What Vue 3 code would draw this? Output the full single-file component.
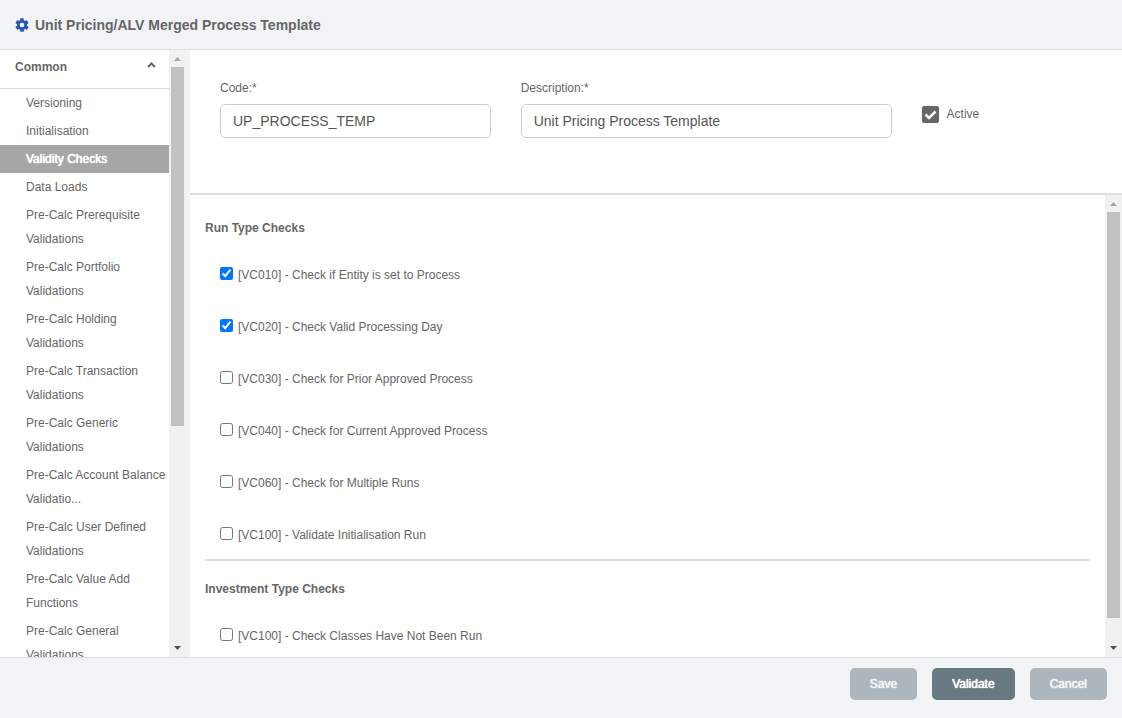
<script setup>
import { ref, reactive } from 'vue'

const code = ref('UP_PROCESS_TEMP')
const description = ref('Unit Pricing Process Template')
const active = ref(true)
const current = ref('Validity Checks')

const navItems = [
  'Versioning',
  'Initialisation',
  'Validity Checks',
  'Data Loads',
  'Pre-Calc Prerequisite Validations',
  'Pre-Calc Portfolio Validations',
  'Pre-Calc Holding Validations',
  'Pre-Calc Transaction Validations',
  'Pre-Calc Generic Validations',
  'Pre-Calc Account Balance Validatio...',
  'Pre-Calc User Defined Validations',
  'Pre-Calc Value Add Functions',
  'Pre-Calc General Validations',
]

const groups = reactive([
  {
    title: 'Run Type Checks',
    checks: [
      { id: 'run-vc010', label: '[VC010] - Check if Entity is set to Process', on: true },
      { id: 'run-vc020', label: '[VC020] - Check Valid Processing Day', on: true },
      { id: 'run-vc030', label: '[VC030] - Check for Prior Approved Process', on: false },
      { id: 'run-vc040', label: '[VC040] - Check for Current Approved Process', on: false },
      { id: 'run-vc060', label: '[VC060] - Check for Multiple Runs', on: false },
      { id: 'run-vc100', label: '[VC100] - Validate Initialisation Run', on: false },
    ],
  },
  {
    title: 'Investment Type Checks',
    checks: [{ id: 'inv-vc100', label: '[VC100] - Check Classes Have Not Been Run', on: false }],
  },
])
</script>

<template>
  <div class="page">
    <header class="header">
      <svg class="gear" viewBox="0 0 24 24" aria-hidden="true">
        <path d="M19.4 13c0-.3.1-.6.1-1s0-.7-.1-1l2.1-1.6c.2-.2.2-.4.1-.7l-2-3.4c-.1-.3-.4-.3-.6-.3l-2.5 1c-.5-.4-1.100-.7-1.700-1l-.4-2.600c0-.2-.2-.4-.5-.4h-4c-.2 0-.4.2-.5.4L9.100 5c-.6.3-1.200.600-1.700 1l-2.400-1c-.3 0-.5 0-.6.3l-2 3.400c-.1.3-.1.5.1.7L4.600 11c0 .3-.1.600-.1 1s0 .7.1 1l-2.100 1.600c-.2.2-.2.400-.1.700l2 3.400c.1.300.3.300.6.300l2.400-1c.500.400 1.100.700 1.700 1l.4 2.600c0 .2.200.400.500.400h4c.2 0 .4-.2.500-.4l.4-2.600c.600-.3 1.200-.600 1.700-1l2.500 1c.2 0 .5 0 .6-.3l2-3.400c.1-.3.1-.5-.1-.7zM12 15.500a3.500 3.500 0 1 1 0-7 3.500 3.500 0 0 1 0 7z" />
      </svg>
      <h1>Unit Pricing/ALV Merged Process Template</h1>
    </header>

    <div class="body">
      <aside class="sidebar">
        <nav class="nav" aria-label="Common">
          <button type="button" class="nav-head" aria-expanded="true">
            Common
            <svg class="caret" viewBox="0 0 9 6" aria-hidden="true"><path d="M1 5l3.500-3.500L8 5" /></svg>
          </button>
          <ul>
            <li v-for="item in navItems" :key="item">
              <a href="#" :class="{ selected: item === current }" @click.prevent="current = item">{{ item }}</a>
            </li>
          </ul>
        </nav>
        <div class="scrollbar" aria-hidden="true">
          <svg class="arrow up" viewBox="0 0 17 17"><path d="M5 11h7L8.500 7z" /></svg>
          <div class="track"><div class="thumb nav-thumb"></div></div>
          <svg class="arrow" viewBox="0 0 17 17"><path d="M5 6h7L8.500 10z" /></svg>
        </div>
      </aside>

      <main class="main">
        <form class="details" @submit.prevent>
          <div class="field">
            <label for="code">Code:*</label>
            <input id="code" v-model="code" type="text" />
          </div>
          <div class="field">
            <label for="description">Description:*</label>
            <input id="description" v-model="description" type="text" />
          </div>
          <div class="field">
            <label class="active" for="active">
              <span class="tick">
                <input id="active" v-model="active" type="checkbox" />
                <svg v-if="active" viewBox="0 0 17 17" aria-hidden="true"><path d="M3.500 8.500l3.500 3.500L13.500 5.500" /></svg>
              </span>
              Active
            </label>
          </div>
        </form>

        <div class="checks-pane">
          <div class="checks">
            <section v-for="group in groups" :key="group.title">
              <h2>{{ group.title }}</h2>
              <div v-for="check in group.checks" :key="check.id" class="check">
                <input :id="check.id" v-model="check.on" type="checkbox" />
                <label :for="check.id">{{ check.label }}</label>
              </div>
            </section>
          </div>
          <div class="scrollbar" aria-hidden="true">
            <svg class="arrow up" viewBox="0 0 17 17"><path d="M5 11h7L8.500 7z" /></svg>
            <div class="track"><div class="thumb checks-thumb"></div></div>
            <svg class="arrow" viewBox="0 0 17 17"><path d="M5 6h7L8.500 10z" /></svg>
          </div>
        </div>
      </main>
    </div>

    <footer class="footer">
      <button type="button" disabled>Save</button>
      <button type="button">Validate</button>
      <button type="button" disabled>Cancel</button>
    </footer>
  </div>
</template>

<style>
body {
  margin: 0;
  background: #fff;
}
</style>

<style scoped>
.page {
  display: flex;
  flex-direction: column;
  height: 100vh;
  overflow: hidden;
  font-family: "Liberation Sans", Arial, sans-serif;
  font-size: 12px;
  line-height: 24px;
  color: #666;
}
.page * {
  box-sizing: border-box;
}
.header {
  display: flex;
  align-items: center;
  gap: 5px;
  padding: 13px 14px 12px;
  background: #f2f3f5;
  border-bottom: 1px solid #dcdee0;
}
.gear {
  width: 16px;
  height: 16px;
  fill: #2459b3;
}
h1 {
  margin: 0;
  font-size: 14px;
  font-weight: bold;
}
.body {
  flex: 1;
  min-height: 0;
  display: flex;
}
.sidebar {
  flex: none;
  display: flex;
  width: 190px;
  padding-right: 4px;
  background: #f3f3f4;
}
.nav {
  flex: 1;
  min-width: 0;
  overflow: hidden;
  background: #fff;
}
.nav-head {
  display: flex;
  justify-content: space-between;
  align-items: flex-start;
  width: 100%;
  padding: 5px 13px 9px 15px;
  border: 0;
  border-bottom: 1px solid #dedede;
  background: none;
  font: bold 12px/24px "Liberation Sans", Arial, sans-serif;
  color: #666;
}
.caret {
  width: 9px;
  height: 6px;
  margin-top: 7px;
  fill: none;
  stroke: #666;
  stroke-width: 2;
}
ul {
  margin: 0;
  padding: 0;
  list-style: none;
}
li a {
  display: block;
  padding: 2px 0 2px 26px;
  color: #666;
  text-decoration: none;
}
li a.selected {
  background: #a6a6a6;
  color: #fff;
  text-shadow: 0 0 1px #fff, 0 0 1px #fff;
}
.scrollbar {
  flex: none;
  display: flex;
  flex-direction: column;
  width: 17px;
  background: #f1f1f1;
}
.arrow {
  flex: none;
  width: 17px;
  height: 17px;
  fill: #505050;
}
.arrow.up {
  fill: #a3a3a3;
}
.track {
  flex: 1;
  padding: 0 2px;
}
.thumb {
  background: #c1c1c1;
}
.nav-thumb {
  height: 62.6%;
}
.checks-thumb {
  height: 94.9%;
}
.main {
  flex: 1;
  min-width: 0;
  display: flex;
  flex-direction: column;
}
.details {
  display: grid;
  grid-template-columns: 3fr 4fr 2fr;
  padding: 26px 15px 55px;
  border-bottom: 2px solid #dedede;
}
.field {
  padding: 0 15px;
}
.field > label {
  display: block;
}
.field > input {
  display: block;
  width: 100%;
  height: 34px;
  margin-top: 4px;
  padding: 0 12px;
  border: 1px solid #ccc;
  border-radius: 5px;
  background: #fff;
  font: 14px "Liberation Sans", Arial, sans-serif;
  color: #555;
}
.field > .active {
  display: flex;
  align-items: center;
  gap: 8px;
  margin-top: 26px;
}
.tick {
  position: relative;
  width: 17px;
  height: 17px;
}
.tick input {
  display: block;
  width: 100%;
  height: 100%;
  margin: 0;
  appearance: none;
  border: 1px solid #666;
  border-radius: 2px;
}
.tick input:checked {
  background: #666;
}
.tick svg {
  position: absolute;
  inset: 0;
  pointer-events: none;
  fill: none;
  stroke: #fff;
  stroke-width: 2.5;
}
.checks-pane {
  flex: 1;
  min-height: 0;
  display: flex;
}
.checks {
  flex: 1;
  min-width: 0;
  overflow: hidden;
  padding: 5px 15px 0;
}
section + section {
  border-top: 2px solid #dedede;
}
h2 {
  margin: 0;
  padding: 16px 0 7px;
  font-size: 12px;
  line-height: 24px;
  font-weight: bold;
}
.check {
  display: flex;
  align-items: center;
  gap: 5px;
  padding: 16px 15px 12px;
}
.check input {
  width: 13px;
  height: 13px;
  margin: 0 0 4px;
}
.footer {
  display: flex;
  justify-content: flex-end;
  gap: 15px;
  padding: 10px 15px 18px;
  background: #f2f3f5;
  border-top: 1px solid #dcdee0;
}
.footer button {
  height: 32px;
  padding: 0 20px;
  border: 0;
  border-radius: 5px;
  background: #687982;
  font: 12px "Liberation Sans", Arial, sans-serif;
  color: #fff;
  text-shadow: 0 0 1px #fff, 0 0 1px #fff;
}
.footer button:disabled {
  background: #adb5bd;
  color: #f2f3f5;
}
</style>
